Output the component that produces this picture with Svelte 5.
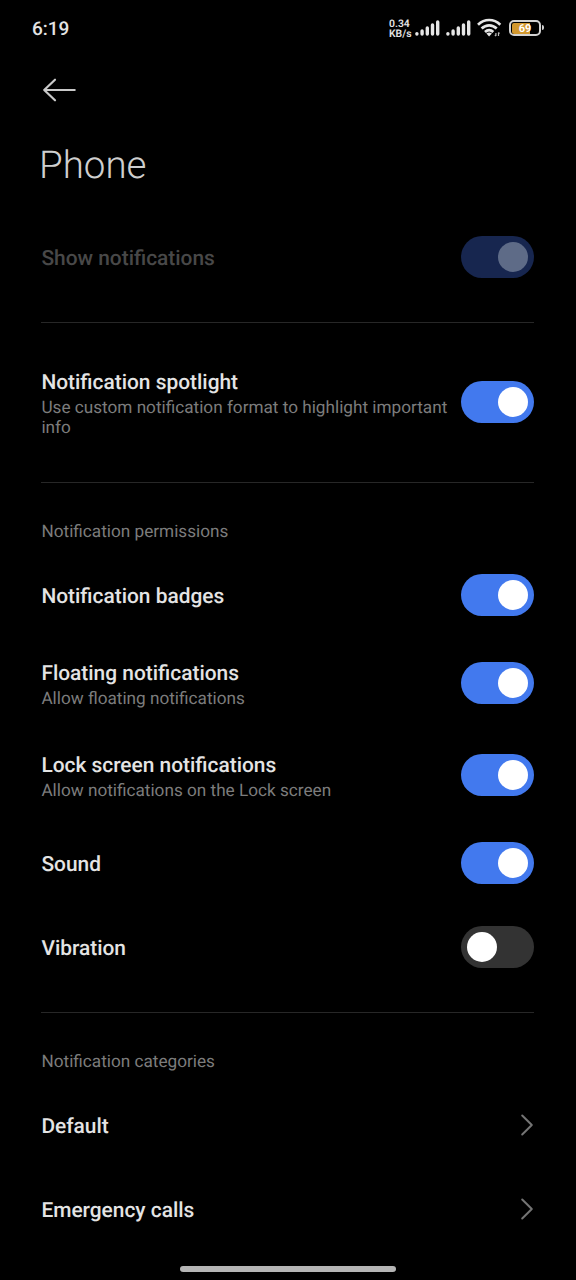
<script>
  let permissions = $state([
    { title: 'Notification badges', on: true },
    { title: 'Floating notifications', sub: 'Allow floating notifications', on: true },
    { title: 'Lock screen notifications', sub: 'Allow notifications on the Lock screen', on: true },
    { title: 'Sound', on: true },
    { title: 'Vibration', on: false }
  ]);
  let spotlight = $state({
    title: 'Notification spotlight',
    sub: 'Use custom notification format to highlight important info',
    on: true,
    tall: true
  });
  let show = $state({ title: 'Show notifications', on: true, disabled: true });
  const categories = ['Default', 'Emergency calls'];
</script>

{#snippet signal()}
  <svg class="signal" width="25" height="16" viewBox="0 0 25 16">
    <g stroke="#e6e6e6" stroke-width="3.4" stroke-linecap="round">
      <path d="M1.9 13.6V14M7.1 10.9V14M12.3 8V14M17.5 5V14M22.7 1.9V14" />
    </g>
  </svg>
{/snippet}

{#snippet row(item)}
  <div class="row" class:double={item.sub} class:tall={item.tall} class:disabled={item.disabled}>
    <div class="text">
      <div class="name">{item.title}</div>
      {#if item.sub}<div class="sub">{item.sub}</div>{/if}
    </div>
    <button
      class="switch"
      class:on={item.on}
      role="switch"
      aria-checked={item.on}
      aria-label={item.title}
      disabled={item.disabled}
      onclick={() => (item.on = !item.on)}
    ><span class="knob"></span></button>
  </div>
{/snippet}

<main class="screen">
  <header class="status">
    <span class="clock">6:19</span>
    <div class="icons">
      <div class="speed"><span>0.34</span><span>KB/s</span></div>
      {@render signal()}
      {@render signal()}
      <svg class="wifi" width="25" height="20" viewBox="0 0 25 20">
        <g fill="none" stroke="#e6e6e6" stroke-width="2.7">
          <path d="M1 6.7C7.5 .4 16.8 .4 23.3 6.7" />
          <path d="M4.6 10.5C9.1 6.2 15.2 6.2 19.7 10.5" />
          <path d="M8 14C10.5 11.6 13.8 11.6 16.3 14" />
        </g>
        <path d="M9.4 15.5Q12.1 13.5 14.9 15.5L12.1 18.4Z" fill="#e6e6e6" />
        <path d="M18.9 15V18M17.9 16.8L18.9 18.1M21.5 18V14.5M22.5 15.6L21.5 14.4" stroke="#bbb" stroke-width="1.2" fill="none" />
      </svg>
      <div class="battery"><div class="shell"><div class="charge"></div><span>69</span></div><div class="tip"></div></div>
    </div>
  </header>

  <nav class="toolbar">
    <svg width="34" height="24" viewBox="0 0 34 24" fill="none" stroke="#c9c9c9" stroke-width="2.2" stroke-linecap="round" stroke-linejoin="round">
      <path d="M13 1.7L2.2 12L13 22.3M2.2 12H32.7" />
    </svg>
  </nav>
  <h1>Phone</h1>

  {@render row(show)}
  <hr />
  {@render row(spotlight)}
  <hr />

  <h2>Notification permissions</h2>
  {#each permissions as item}
    {@render row(item)}
  {/each}
  <hr />

  <h2>Notification categories</h2>
  {#each categories as name}
    <div class="row">
      <div class="name">{name}</div>
      <svg class="chevron" width="14" height="24" viewBox="0 0 14 24" fill="none" stroke="#747474" stroke-width="2" stroke-linecap="round" stroke-linejoin="round">
        <path d="M2.2 2.5L11.8 12L2.2 21.5" />
      </svg>
    </div>
  {/each}
  <footer><div class="handle"></div></footer>
</main>

<style>
  :global(body) {
    margin: 0;
    background: #000;
  }
  .screen {
    box-sizing: border-box;
    width: 576px;
    height: 1280px;
    overflow: hidden;
    display: flex;
    flex-direction: column;
    background: #000;
    color: #e4e4e4;
    font-family: Roboto, sans-serif;
    text-rendering: geometricPrecision;
  }
  .status {
    height: 56px;
    flex: none;
    display: flex;
    justify-content: space-between;
    align-items: center;
    padding: 0 32px 0 32px;
  }
  .clock {
    font-size: 19px;
    font-weight: 500;
  }
  .icons {
    display: flex;
    align-items: center;
  }
  .speed {
    display: flex;
    flex-direction: column;
    width: 26px;
    font-size: 10.4px;
    line-height: 10.5px;
    font-weight: 600;
    padding-top: 2px;
    white-space: nowrap;
  }
  .signal {
    margin-right: 6px;
  }
  .wifi {
    margin-right: 7px;
  }
  .battery {
    display: flex;
    align-items: center;
    gap: 1px;
    margin-top: -1px;
  }
  .shell {
    box-sizing: border-box;
    width: 32px;
    height: 16px;
    border: 2px solid #d2d2d2;
    border-radius: 5px;
    padding: 1px;
    display: grid;
    align-items: center;
  }
  .charge {
    grid-area: 1 / 1;
    width: 18px;
    height: 100%;
    border-radius: 2px 0 0 2px;
    background: #d2982f;
  }
  .shell span {
    grid-area: 1 / 1;
    text-align: center;
    font-size: 11px;
    line-height: 10px;
    padding-top: 1px;
    font-weight: 700;
    color: #fff;
  }
  .tip {
    width: 2px;
    height: 5px;
    border-radius: 0 2px 2px 0;
    background: #cfcfcf;
  }
  .toolbar {
    flex: none;
    height: 68px;
    padding-left: 42px;
    display: flex;
    align-items: center;
  }
  h1 {
    flex: none;
    margin: 0;
    height: 91px;
    padding-left: 39px;
    font-size: 38.5px;
    line-height: 83px;
    font-weight: 300;
    color: #cfcfcf;
  }
  h2 {
    flex: none;
    margin: 0;
    height: 47px;
    padding-left: 41.5px;
    font-size: 17.18px;
    line-height: 52px;
    font-weight: 400;
    color: #7c7c7c;
  }
  hr {
    flex: none;
    box-sizing: border-box;
    width: 493px;
    height: 1px;
    margin: 23px 0 23px 41px;
    border: 0;
    background: #272727;
  }
  .row {
    flex: none;
    box-sizing: border-box;
    height: 84px;
    padding: 0 42px 0 41.4px;
    display: flex;
    align-items: center;
    justify-content: space-between;
  }
  .row.double {
    height: 92px;
  }
  .row.double.tall {
    height: 112px;
    margin-bottom: 1px;
  }
  .text {
    width: 412px;
  }
  .name {
    font-size: 20.9px;
    line-height: 26px;
    font-weight: 500;
    padding-top: 4px;
  }
  .sub {
    font-size: 17.18px;
    line-height: 20px;
    color: #7c7c7c;
    padding-top: 2px;
  }
  .switch {
    flex: none;
    width: 73px;
    height: 42px;
    border: 0;
    border-radius: 21px;
    padding: 0 6px;
    display: flex;
    align-items: center;
    background: #333;
  }
  .switch.on {
    justify-content: flex-end;
    background: #4279ee;
  }
  .knob {
    width: 30px;
    height: 30px;
    border-radius: 50%;
    background: #fff;
  }
  .disabled .name {
    color: #484848;
  }
  .disabled .switch {
    background: #17264f;
  }
  .disabled .knob {
    background: #5e6b87;
  }
  footer {
    flex: none;
    height: 29px;
    display: flex;
    justify-content: center;
    padding-top: 15px;
  }
  .handle {
    width: 216px;
    height: 6px;
    border-radius: 3px;
    background: #b5b5b5;
  }
</style>
